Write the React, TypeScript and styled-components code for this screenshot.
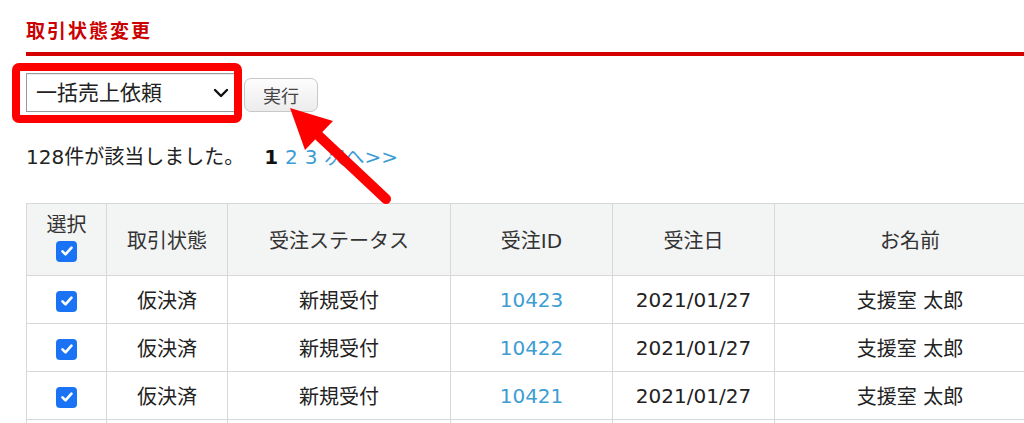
import styled, { createGlobalStyle } from 'styled-components'

const GlobalStyle = createGlobalStyle`
  html, body {
    margin: 0;
    padding: 0;
    background: #fff;
    overflow: hidden;
  }
  body {
    font-family: 'DejaVu Sans', 'Noto Sans CJK JP', sans-serif;
    color: #222;
  }
`

interface IOrder {
  status: string
  orderStatus: string
  id: string
  date: string
  name: string
}

const orders: IOrder[] = [
  { status: '仮決済', orderStatus: '新規受付', id: '10423', date: '2021/01/27', name: '支援室 太郎' },
  { status: '仮決済', orderStatus: '新規受付', id: '10422', date: '2021/01/27', name: '支援室 太郎' },
  { status: '仮決済', orderStatus: '新規受付', id: '10421', date: '2021/01/27', name: '支援室 太郎' },
]

const Page = styled.div`
  position: relative;
  width: 1024px;
  height: 423px;
  padding: 18px 0 0 26px;
  box-sizing: border-box;
`

const Title = styled.h2`
  margin: 0;
  font-size: 19px;
  font-weight: bold;
  letter-spacing: 2px;
  line-height: 26px;
  color: #cc0000;
  padding-bottom: 8px;
  border-bottom: 4px solid #d40000;
`

const ActionRow = styled.div`
  display: flex;
  align-items: center;
  gap: 6px;
  margin-top: 17px;
  height: 39px;
`

const Select = styled.select`
  appearance: none;
  width: 212px;
  height: 39px;
  padding: 0 30px 0 9px;
  font-family: 'DejaVu Sans', 'Noto Sans CJK JP', sans-serif;
  font-size: 21px;
  color: #222;
  background-color: #fff;
  background-image: url("data:image/svg+xml,%3Csvg xmlns='http://www.w3.org/2000/svg' width='16' height='10' viewBox='0 0 16 10'%3E%3Cpath d='M2 2l6 6 6-6' fill='none' stroke='%23111' stroke-width='2.4' stroke-linecap='round' stroke-linejoin='round'/%3E%3C/svg%3E");
  background-repeat: no-repeat;
  background-position: right 8px center;
  border: 1px solid #9a9a9a;
  border-radius: 0;
  box-shadow: inset 0 1px 1px rgba(0, 0, 0, 0.08);
`

const ExecButton = styled.button`
  width: 74px;
  height: 34px;
  margin-top: 4px;
  font-family: 'DejaVu Sans', 'Noto Sans CJK JP', sans-serif;
  font-size: 18px;
  color: #444;
  background: linear-gradient(#fdfdfd, #ececec);
  border: 1px solid #c8c8c8;
  border-radius: 7px;
`

const ResultRow = styled.div`
  display: flex;
  align-items: baseline;
  margin-top: 32px;
  font-size: 20px;
  line-height: 26px;
  color: #222;
`

const Count = styled.span`
  margin-right: 20px;
`

const PageLink = styled.span<{ $current?: boolean }>`
  margin-right: 7px;
  color: ${p => (p.$current ? '#111' : '#3c9dd5')};
  font-weight: ${p => (p.$current ? 'bold' : 'normal')};
`

const Table = styled.table`
  margin-top: 33px;
  width: 1020px;
  table-layout: fixed;
  border-collapse: collapse;
  font-size: 20px;
`

const HeadCell = styled.th`
  height: 71px;
  padding: 0;
  font-weight: normal;
  color: #333;
  text-align: center;
  vertical-align: middle;
  background: #f3f4f4;
  border: 1px solid #d8d8d8;
`

const SelectHead = styled.div`
  display: flex;
  flex-direction: column;
  align-items: center;
  gap: 5px;
  margin-top: -4px;
  line-height: 22px;
`

const Cell = styled.td<{ $link?: boolean }>`
  height: 47px;
  padding: 0;
  text-align: center;
  vertical-align: middle;
  color: ${p => (p.$link ? '#3c9dd5' : '#222')};
  border: 1px solid #d8d8d8;
`

const Check = styled.span`
  display: inline-flex;
  align-items: center;
  justify-content: center;
  width: 21px;
  height: 21px;
  border-radius: 4px;
  background: #1a73f5;
  vertical-align: middle;
`

const Overlay = styled.svg`
  position: absolute;
  left: 0;
  top: 0;
  pointer-events: none;
`

const CheckBox = () => (
  <Check>
    <svg width='14' height='14' viewBox='0 0 14 14'>
      <path d='M2.5 7.3l3 3 6-6.6' fill='none' stroke='#fff' strokeWidth='2.6' strokeLinecap='round' strokeLinejoin='round' />
    </svg>
  </Check>
)

const App = () => {
  return (
    <Page>
      <GlobalStyle />
      <Title>取引状態変更</Title>
      <ActionRow>
        <Select defaultValue='sales'>
          <option value='sales'>一括売上依頼</option>
        </Select>
        <ExecButton>実行</ExecButton>
      </ActionRow>
      <ResultRow>
        <Count>128件が該当しました。</Count>
        <PageLink $current>1</PageLink>
        <PageLink>2</PageLink>
        <PageLink>3</PageLink>
        <PageLink>次へ&gt;&gt;</PageLink>
      </ResultRow>
      <Table>
        <colgroup>
          <col style={{ width: 80 }} />
          <col style={{ width: 121 }} />
          <col style={{ width: 223 }} />
          <col style={{ width: 162 }} />
          <col style={{ width: 162 }} />
          <col />
        </colgroup>
        <thead>
          <tr>
            <HeadCell>
              <SelectHead>
                選択
                <CheckBox />
              </SelectHead>
            </HeadCell>
            <HeadCell>取引状態</HeadCell>
            <HeadCell>受注ステータス</HeadCell>
            <HeadCell>受注ID</HeadCell>
            <HeadCell>受注日</HeadCell>
            <HeadCell>お名前</HeadCell>
          </tr>
        </thead>
        <tbody>
          {orders.map(order => (
            <tr key={order.id}>
              <Cell>
                <CheckBox />
              </Cell>
              <Cell>{order.status}</Cell>
              <Cell>{order.orderStatus}</Cell>
              <Cell $link>{order.id}</Cell>
              <Cell>{order.date}</Cell>
              <Cell>{order.name}</Cell>
            </tr>
          ))}
          <tr>
            <Cell />
            <Cell />
            <Cell />
            <Cell />
            <Cell />
            <Cell />
          </tr>
        </tbody>
      </Table>
      <Overlay width='1024' height='423' viewBox='0 0 1024 423'>
        <rect x='16' y='67' width='222' height='52' rx='3' fill='none' stroke='#ff0000' strokeWidth='8' />
        <line x1='319' y1='136' x2='386' y2='199' stroke='#ff0000' strokeWidth='10' strokeLinecap='round' />
        <polygon points='290,108 333,121 305,150' fill='#ff0000' />
      </Overlay>
    </Page>
  )
}

export default App
